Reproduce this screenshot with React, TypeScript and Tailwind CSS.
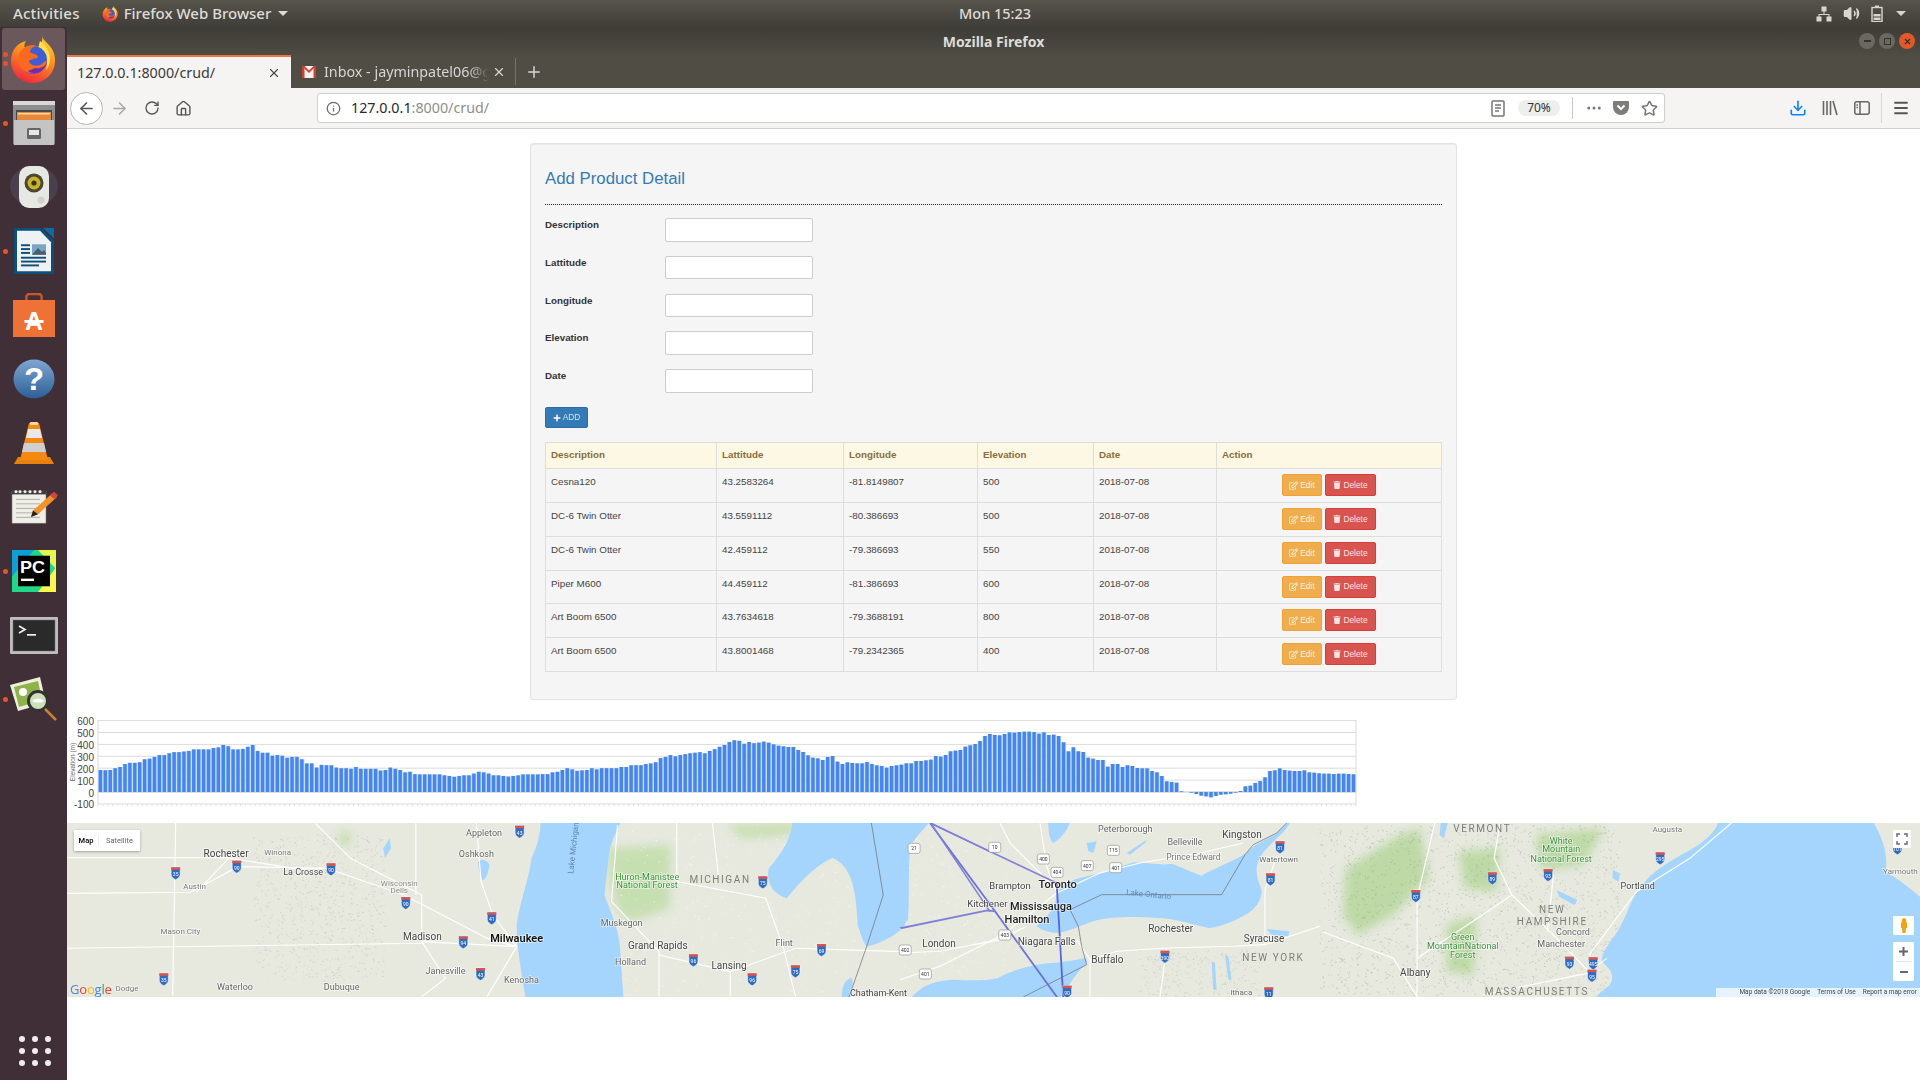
import { ArrowLeft, ArrowRight, Download, Home, Info, Menu, MoreHorizontal, Plus, RotateCw, Star, Volume2, X } from "lucide-react";
import { FaPlus, FaRegEdit, FaTrash } from "react-icons/fa";

const rows = [
  ["Cesna120", "43.2583264", "-81.8149807", "500", "2018-07-08"],
  ["DC-6 Twin Otter", "43.5591112", "-80.386693", "500", "2018-07-08"],
  ["DC-6 Twin Otter", "42.459112", "-79.386693", "550", "2018-07-08"],
  ["Piper M600", "44.459112", "-81.386693", "600", "2018-07-08"],
  ["Art Boom 6500", "43.7634618", "-79.3688191", "800", "2018-07-08"],
  ["Art Boom 6500", "43.8001468", "-79.2342365", "400", "2018-07-08"],
];

// elevation samples read off the chart, left part in metres
const leftBars = [
  185, 183, 185, 200, 210, 235, 245, 245, 250, 275, 280, 295, 310, 310, 325, 335, 335, 340, 345, 358, 358, 358, 358, 370, 375, 395, 385, 358, 358,
  362, 380, 395, 345, 330, 330, 305, 310, 305, 288, 295, 295, 275, 240, 240, 205, 228, 225, 225, 205, 200, 200, 195, 210, 195, 195, 195, 195, 180,
  185, 205, 195, 185, 165, 170, 150, 148, 148, 148, 148, 148, 140, 135, 128, 135, 140, 140, 155, 170, 165, 155, 140, 140, 135, 130, 135, 140, 148,
  148, 148, 148, 150, 150, 165, 170, 185, 200, 190, 178, 182, 185, 200, 190, 200, 200, 200, 200, 210, 210, 225, 225, 225, 235, 240, 250, 285, 295,
  310, 300, 310, 318, 325, 330, 335, 325, 345, 360, 380, 395, 420, 435, 430, 405, 420, 410, 415,
];
// right part, stored as the pixel row of the bar top (3x crop)
const rightTops = [
  95, 98, 103, 107, 109, 111, 111, 120, 126, 136, 143, 145, 150, 141, 138, 155, 162, 157, 159, 160, 160, 156, 162, 166, 168, 173, 168, 166, 164, 160,
  160, 153, 153, 151, 149, 138, 140, 135, 124, 122, 120, 110, 106, 102, 93, 78, 72, 75, 76, 72, 67, 68, 66, 65, 65, 66, 71, 67, 75, 74, 78, 97, 124,
  112, 124, 126, 143, 146, 150, 150, 170, 162, 162, 171, 166, 168, 174, 175, 175, 183, 187, 198, 214, 216, 218, 244, 246, 248, 252, 257, 259, 262,
  258, 254, 253, 251, 248, 243, 229, 227, 219, 213, 202, 183, 181, 175, 180, 182, 183, 183, 181, 187, 188, 190, 191, 191, 192, 191, 191, 192, 193,
];
const bars = [...leftBars, ...rightTops.map((t) => (246 - t) / 0.357)];

const Dot = ({ top }: { top: number }) => (
  <span className="absolute left-[3px] w-[5px] h-[5px] rounded-full bg-[#e95420]" style={{ top }} />
);

const FirefoxIcon = ({ size = 50 }: { size?: number }) => (
  <svg width={size} height={size} viewBox="0 0 50 50">
    <defs>
      <linearGradient id={`ff${size}`} x1="0.7" y1="0" x2="0.3" y2="1">
        <stop offset="0" stopColor="#ffd52a" />
        <stop offset="0.45" stopColor="#ff8a1e" />
        <stop offset="1" stopColor="#f0263c" />
      </linearGradient>
    </defs>
    <path d="M33 2c1 5 8 8 11 15 4 9 2 19-4 25-5 5-11 7-16 7C11 49 2 39 2 27 2 17 8 9 17 7c-2 3-2 5-1 7 3-3 9-3 13-1 4-4 5-7 4-11z" fill={`url(#ff${size})`} />
    <path d="M31 7c5 4 10 9 10 18 0 5-2 9-4 11 2-7 0-14-6-18-2-4-1-8 0-11z" fill="#ffe14a" />
    <circle cx="24" cy="26" r="14" fill="#3f5cd8" />
    <path d="M10 20c3-7 10-10 17-8-4 1-6 4-6 6 3 2 8 2 8 5-2 2-7 2-9 4 1 5 9 6 13 3 3-3 4-3 5-3-1 8-9 13-17 12C12 38 7 28 10 20z" fill="#f9691e" />
    <path d="M26 34c5 1 10-1 12-6-1 6-6 11-13 11-3 0-5-1-6-2 2-1 5-2 7-3z" fill="#7a2aa8" />
  </svg>
);

const FilesIcon = () => (
  <svg width="42" height="44" viewBox="0 0 42 44">
    <rect x="0" y="0" width="42" height="44" rx="2" fill="#8d8d8d" />
    <rect x="0" y="0" width="42" height="4" fill="#d8d8d8" />
    <rect x="3" y="9" width="36" height="11" fill="#4a4a4a" />
    <rect x="4" y="11" width="34" height="9" fill="#e8883a" />
    <rect x="5" y="12" width="32" height="1.5" fill="#f4d9a8" />
    <rect x="1" y="19" width="40" height="25" fill="#c4c4c4" />
    <rect x="14" y="27" width="14" height="11" rx="1.5" fill="#666" />
    <rect x="16" y="29" width="10" height="5" fill="#e6e6e6" />
  </svg>
);

const SpeakerIcon = () => (
  <svg width="48" height="42" viewBox="0 0 48 42">
    <ellipse cx="24" cy="20" rx="24" ry="20" fill="#5c5468" opacity="0.45" />
    <rect x="9" y="0" width="30" height="42" rx="10" fill="#e6e8e4" />
    <circle cx="24" cy="17" r="9.5" fill="#4a4630" />
    <circle cx="24" cy="17" r="6.5" fill="#c8b32a" />
    <circle cx="24" cy="17" r="2.6" fill="#3a3620" />
    <circle cx="31" cy="34" r="3.5" fill="#cfd1cc" />
  </svg>
);

const WriterIcon = () => (
  <svg width="42" height="48" viewBox="0 0 42 50" preserveAspectRatio="none">
    <path d="M1 1h27l13 13v35H1z" fill="#0b4f7a" />
    <path d="M30 1h11v11z" fill="#0e6aa5" />
    <path d="M4 4h23l11 12v30H4z" fill="#eef2f3" />
    <rect x="8" y="18" width="9" height="2" fill="#0b4f7a" />
    <rect x="8" y="22" width="9" height="2" fill="#0b4f7a" />
    <rect x="8" y="26" width="9" height="2" fill="#0b4f7a" />
    <rect x="19" y="18" width="14" height="11" fill="#7aa6c4" />
    <path d="M19 29l6-7 4 4 2-2 2 3v2z" fill="#44606f" />
    <rect x="8" y="31" width="25" height="2" fill="#0b4f7a" />
    <rect x="8" y="35" width="25" height="2" fill="#0b4f7a" />
    <rect x="8" y="39" width="18" height="2" fill="#0b4f7a" />
  </svg>
);

const StoreIcon = () => (
  <svg width="42" height="44" viewBox="0 0 44 44" preserveAspectRatio="none">
    <path d="M14 9V4a3 3 0 013-3h10a3 3 0 013 3v5" fill="none" stroke="#c9572a" strokeWidth="2.5" />
    <path d="M0 7h44v37H0z" fill="#ee7135" />
    <text x="22" y="37" textAnchor="middle" fontSize="26" fontWeight="700" fill="#fff" fontFamily="'Liberation Sans',sans-serif">
      A
    </text>
    <rect x="12" y="27" width="20" height="3" fill="#fff" />
  </svg>
);

const HelpIcon = () => (
  <svg width="42" height="40" viewBox="0 0 42 42" preserveAspectRatio="none">
    <defs>
      <linearGradient id="hp" x1="0" y1="0" x2="0" y2="1">
        <stop offset="0" stopColor="#7ea7d2" />
        <stop offset="1" stopColor="#2c5f97" />
      </linearGradient>
    </defs>
    <circle cx="21" cy="21" r="20.5" fill="url(#hp)" />
    <text x="21" y="33" textAnchor="middle" fontSize="33" fontWeight="700" fill="#fff" fontFamily="'Liberation Sans',sans-serif">
      ?
    </text>
  </svg>
);

const VlcIcon = () => (
  <svg width="42" height="44" viewBox="0 0 42 44">
    <path d="M5 36h32l4 7H1z" fill="#e8820c" />
    <path d="M16 2h10l9 37H7z" fill="#f58a12" />
    <path d="M15 8h12l2 9H13z" fill="#e9e9e9" />
    <path d="M11 22h20l2 9H9z" fill="#cfcfcf" />
    <rect x="17" y="1" width="8" height="3" rx="1" fill="#f9d9a0" />
  </svg>
);

const NotepadIcon = () => (
  <svg width="48" height="36" viewBox="0 0 48 40" preserveAspectRatio="none">
    <rect x="2" y="3" width="34" height="35" fill="#efefe8" stroke="#777" strokeWidth="0.6" />
    <rect x="2" y="1" width="34" height="5" fill="#3d3d3d" />
    {[6, 10, 15, 20, 25, 30].map((x) => (
      <circle key={x} cx={x} cy="3" r="1.6" fill="#eee" />
    ))}
    {[11, 16, 21, 26, 31].map((y) => (
      <rect key={y} x="6" y={y} width="24" height="1" fill="#a9a9a2" />
    ))}
    <path d="M21 31l2-7 19-19 5 4-19 19z" fill="#f2922a" />
    <path d="M40 7l4-4 4 4-4 4z" fill="#d6453b" />
    <path d="M21 31l2-7 5 4z" fill="#222" />
  </svg>
);

const PyCharmIcon = () => (
  <svg width="44" height="42" viewBox="0 0 44 44" preserveAspectRatio="none">
    <rect width="44" height="44" fill="#21d789" />
    <path d="M0 0h22L0 28z" fill="#0d9fd8" />
    <path d="M26 0h18v20z" fill="#fcf84a" opacity="0.9" />
    <path d="M44 18v26H26z" fill="#fcf84a" />
    <rect x="6" y="6" width="32" height="32" fill="#000" />
    <text x="8" y="24" fontSize="18" fontWeight="700" fill="#fff" fontFamily="'Liberation Sans',sans-serif">
      PC
    </text>
    <rect x="9" y="30" width="13" height="2.5" fill="#fff" />
  </svg>
);

const TerminalIcon = () => (
  <svg width="48" height="37" viewBox="0 0 48 37">
    <rect width="48" height="37" rx="1" fill="#bdbdbd" />
    <rect x="3" y="3" width="42" height="31" fill="#2a2a2a" stroke="#777" strokeWidth="0.5" />
    <path d="M9 9l6 3.500-6 3.500" stroke="#eee" strokeWidth="1.7" fill="none" />
    <rect x="17" y="17" width="9" height="1.7" fill="#eee" />
  </svg>
);

const ViewerIcon = () => (
  <svg width="47" height="45" viewBox="0 0 47 45">
    <path d="M0 8L30 0l6 26L8 34z" fill="#eef0dd" />
    <path d="M4 10l24-6 4 19L9 30z" fill="#8db34a" />
    <circle cx="13" cy="15" r="4" fill="#fff" />
    <circle cx="28" cy="24" r="9.5" fill="#cfe0b8" stroke="#333" strokeWidth="3" />
    <path d="M22 24c3-3 9-3 12 0-3 2-9 2-12 0z" fill="#fff" />
    <path d="M35 32l11 11" stroke="#c9832e" strokeWidth="2.5" />
  </svg>
);

const dockItems = [
  { icon: <FirefoxIcon />, active: true, dots: [25, 34] },
  { icon: <FilesIcon />, dots: [30] },
  { icon: <SpeakerIcon />, dots: [] },
  { icon: <WriterIcon />, dots: [30] },
  { icon: <StoreIcon />, dots: [] },
  { icon: <HelpIcon />, dots: [] },
  { icon: <VlcIcon />, dots: [] },
  { icon: <NotepadIcon />, dots: [] },
  { icon: <PyCharmIcon />, dots: [30] },
  { icon: <TerminalIcon />, dots: [] },
  { icon: <ViewerIcon />, dots: [30] },
];

const Dock = () => (
  <aside className="w-[67px] shrink-0 bg-[#412f37] flex flex-col">
    {dockItems.map((item, i) => (
      <div key={i} className="relative h-[64px] flex items-center justify-center">
        {item.active && <div className="absolute inset-x-[2px] top-[1px] bottom-[1px] rounded-[3px] bg-[#6b585c]" />}
        {item.dots.map((d) => (
          <Dot key={d} top={d} />
        ))}
        <div className="relative flex">{item.icon}</div>
      </div>
    ))}
    <div className="mt-auto mb-[14px] ml-[19px] grid grid-cols-3 gap-x-[7px] gap-y-[6px] w-[32px]">
      {Array.from({ length: 9 }).map((_, i) => (
        <span key={i} className="w-[6px] h-[6px] rounded-full bg-[#eeeeee]" />
      ))}
    </div>
  </aside>
);

const TopBar = () => (
  <header className="h-[27px] shrink-0 flex items-center bg-linear-to-b from-[#57544c] to-[#403e38] text-[#dedcd6] text-[15px] font-['Noto_Sans',sans-serif]">
    <div className="w-[959px] flex items-center">
      <span className="ml-[13px] font-medium tracking-[0.2px]">Activities</span>
      <span className="ml-[22px]">
        <FirefoxIcon size={17} />
      </span>
      <span className="ml-[5px] font-medium">Firefox Web Browser</span>
      <span className="ml-[7px] border-x-[5px] border-x-transparent border-t-[5px] border-t-[#dedcd6]" />
    </div>
    <span className="font-medium text-[14.5px]">Mon 15:23</span>
    <div className="ml-auto flex items-center mr-[14px]">
      <svg width="16" height="16" viewBox="0 0 16 16" fill="#d8d6d0">
        <rect x="5.5" y="0.5" width="5" height="5" />
        <rect x="0.5" y="10.5" width="5" height="5" />
        <rect x="10.5" y="10.5" width="5" height="5" />
        <path d="M7.5 5h1v3h5v3h-1V9H3.5v2h-1V8h5z" />
      </svg>
      <Volume2 size={17} className="ml-[11px] text-[#d8d6d0]" fill="#d8d6d0" />
      <svg className="ml-[11px]" width="12" height="17" viewBox="0 0 12 17" fill="none">
        <rect x="1" y="2.5" width="10" height="14" stroke="#d8d6d0" strokeWidth="1.4" />
        <rect x="4" y="0.5" width="4" height="2" fill="#d8d6d0" />
        <rect x="2.5" y="9" width="7" height="2.5" fill="#d8d6d0" />
        <rect x="2.5" y="12.5" width="7" height="2.5" fill="#d8d6d0" />
      </svg>
      <span className="ml-[13px] border-x-[5px] border-x-transparent border-t-[5px] border-t-[#d8d6d0]" />
    </div>
  </header>
);

const WindowButton = ({ children, close }: { children: React.ReactNode; close?: boolean }) => (
  <span
    className={
      close
        ? "w-[16px] h-[16px] rounded-full bg-[#e2582a] flex items-center justify-center text-[#3c2a20]"
        : "w-[16px] h-[16px] rounded-full bg-[#6b6860] flex items-center justify-center text-[#35332e]"
    }
  >
    {children}
  </span>
);

const GmailIcon = () => (
  <svg width="14" height="12" viewBox="0 0 14 12">
    <rect width="14" height="12" fill="#f3f3f3" />
    <path d="M0 0h2.5v12H0zM11.5 0H14v12h-2.5z" fill="#d23f31" />
    <path d="M0 0h2.5L7 4.5 11.5 0H14L7 7z" fill="#d23f31" />
  </svg>
);

const TabStrip = () => (
  <div className="h-[33px] flex items-stretch text-[14.3px] font-['Noto_Sans',sans-serif]">
    <div className="w-[224px] bg-[#f5f4f2] border-t-[2px] border-[#f0764a] flex items-center pl-[10px] pr-[10px] justify-between text-[#3b3b38]">
      <span>127.0.0.1:8000/crud/</span>
      <X size={14} className="text-[#4a4a48]" />
    </div>
    <div className="w-[225px] flex items-center pl-[11px] text-[#d8d6d0] border-r border-[#77746c] my-[3px]">
      <GmailIcon />
      <span className="ml-[8px] w-[165px] whitespace-nowrap [mask-image:linear-gradient(to_right,black_88%,transparent)]">Inbox - jayminpatel06@g</span>
      <X size={14} className="ml-[3px]" />
    </div>
    <span className="ml-[9px] flex items-center text-[#d8d6d0]">
      <Plus size={18} />
    </span>
  </div>
);

const Toolbar = () => (
  <div className="h-[41px] shrink-0 flex items-center bg-[#f5f4f2] border-b border-[#cfcecb] text-[#555553] text-[14.3px] font-['Noto_Sans',sans-serif]">
    <span className="ml-[3px] w-[33px] h-[33px] rounded-full border border-[#b5b5b2] bg-white flex items-center justify-center">
      <ArrowLeft size={19} />
    </span>
    <ArrowRight size={19} className="ml-[7px] text-[#aaa9a6]" />
    <RotateCw size={16} className="ml-[15px]" />
    <Home size={17} className="ml-[15px]" />
    <div className="ml-[125px] w-[1348px] h-[30px] bg-white border border-[#cfcecb] rounded-[3px] flex items-center">
      <Info size={15} className="ml-[8px] text-[#6a6a68]" />
      <span className="ml-[10px] text-[#2a2a28]">
        127.0.0.1<span className="text-[#8f8f8c]">:8000/crud/</span>
      </span>
      <div className="ml-auto flex items-center">
        <svg width="14" height="17" viewBox="0 0 14 17" fill="none" stroke="#777" strokeWidth="1.5">
          <rect x="1" y="1" width="12" height="15" rx="1" />
          <path d="M4 5h6M4 8h6M4 11h4" />
        </svg>
        <span className="ml-[13px] w-[42px] h-[16px] rounded-full bg-[#eeeeec] flex items-center justify-center text-[12px] text-[#333]">70%</span>
        <span className="ml-[12px] w-px h-[22px] bg-[#c9c8c5]" />
        <MoreHorizontal size={18} className="ml-[12px] text-[#777]" />
        <svg className="ml-[10px]" width="16" height="16" viewBox="0 0 16 16">
          <path d="M1 1h14a1 1 0 011 1v5a8 8 0 01-16 0V2a1 1 0 011-1z" fill="#7c7c7a" />
          <path d="M4.5 5.5L8 9l3.5-3.5" stroke="#fff" strokeWidth="2" fill="none" />
        </svg>
        <Star size={17} className="ml-[12px] mr-[6px] text-[#777]" strokeWidth={2.2} />
      </div>
    </div>
    <Download size={18} className="ml-[124px] text-[#0a84ff]" strokeWidth={2.2} />
    <svg className="ml-[15px]" width="16" height="16" viewBox="0 0 16 16" stroke="#666" strokeWidth="1.6" fill="none">
      <path d="M1.5 1v14M5 1v14M8.5 1v14M11 1l4 14" />
    </svg>
    <svg className="ml-[16px]" width="16" height="14" viewBox="0 0 16 14" stroke="#666" strokeWidth="1.5" fill="none">
      <rect x="0.8" y="0.8" width="14.4" height="12.4" rx="2" />
      <path d="M6 1v12" />
      <path d="M2.5 4H4M2.5 6.5H4" />
    </svg>
    <span className="ml-[11px] w-px h-[30px] bg-[#d6d5d2]" />
    <Menu size={18} className="ml-[10px] text-[#555]" strokeWidth={2.4} />
  </div>
);

const inputs = ["Description", "Lattitude", "Longitude", "Elevation", "Date"];

const ProductPanel = () => (
  <section className="mx-auto mt-[14px] w-[927px] h-[557px] shrink-0 bg-[#f5f5f5] border border-[#e3e3e3] rounded-[3px] px-[14px] font-['Liberation_Sans',Arial,sans-serif] text-[9.8px] text-[#333] shadow-[inset_0_1px_1px_rgba(0,0,0,0.05)]">
    <h2 className="mt-[25px] text-[16.8px] leading-[19px] text-[#337ab7]">Add Product Detail</h2>
    <div className="mt-[16px] border-t border-dotted border-[#222]" />
    <div className="mt-[13px] flex flex-col gap-[14.2px]">
      {inputs.map((label) => (
        <div key={label} className="flex items-start">
          <label className="w-[120px] font-bold leading-[14px]">{label}</label>
          <input className="w-[148px] h-[23.6px] bg-white border border-[#cccccc] rounded-[2px]" />
        </div>
      ))}
    </div>
    <button className="mt-[14.5px] w-[43px] h-[21px] flex items-center justify-center gap-[2px] bg-[#337ab7] border border-[#2e6da4] rounded-[2px] text-white text-[8.4px]">
      <FaPlus size={8} />
      <span className="opacity-80">ADD</span>
    </button>
    <table className="mt-[14px] w-[897px] table-fixed border-collapse">
      <colgroup>
        <col className="w-[171px]" />
        <col className="w-[127px]" />
        <col className="w-[134px]" />
        <col className="w-[116px]" />
        <col className="w-[123px]" />
        <col />
      </colgroup>
      <thead>
        <tr className="h-[26px] bg-[#fcf8e3] text-[#8a6d3b]">
          {["Description", "Lattitude", "Longitude", "Elevation", "Date", "Action"].map((h) => (
            <th key={h} className="border border-[#dddddd] px-[5px] text-left font-bold">
              {h}
            </th>
          ))}
        </tr>
      </thead>
      <tbody className="text-[#444]">
        {rows.map((row, i) => (
          <tr key={i} className="h-[33.8px]">
            {row.map((cell, j) => (
              <td key={j} className="border border-[#dddddd] px-[5px] pt-[6px] align-top leading-[14px]">
                {cell}
              </td>
            ))}
            <td className="border border-[#dddddd] pt-[5px] align-top text-center">
              <div className="flex justify-center gap-[3px]">
                <button className="w-[40px] h-[22px] flex items-center justify-center gap-[2px] bg-[#f0ad4e] border border-[#eea236] rounded-[2px] text-[#fff3df] text-[8.4px]">
                  <FaRegEdit size={9} />
                  Edit
                </button>
                <button className="w-[51px] h-[22px] flex items-center justify-center gap-[2px] bg-[#d9534f] border border-[#d43f3a] rounded-[2px] text-[#fbe3e2] text-[8.4px]">
                  <FaTrash size={8} />
                  Delete
                </button>
              </div>
            </td>
          </tr>
        ))}
      </tbody>
    </table>
  </section>
);

const Chart = () => {
  const x0 = 98;
  const x1 = 1356;
  const pitch = (x1 - x0) / bars.length;
  const ticks = [600, 500, 400, 300, 200, 100, 0, -100];
  return (
    <svg className="block mt-[12px] shrink-0" width="1300" height="111" viewBox="67 712 1300 111" fontFamily="'Liberation Sans',Arial,sans-serif">
      {ticks.map((t) => {
        const y = 792 - t * 0.119;
        return (
          <g key={t}>
            <line x1={x0} x2={x1} y1={y} y2={y} stroke={t === 0 ? "#bdbdbd" : "#dcdcdc"} />
            <text x={x0 - 4} y={y + 4.5} textAnchor="end" fontSize="10" fill="#444">
              {t}
            </text>
          </g>
        );
      })}
      <line x1={x0} x2={x0} y1={720} y2={804} stroke="#dcdcdc" />
      <line x1={x1} x2={x1} y1={720} y2={806} stroke="#dcdcdc" />
      {bars.map((v, i) => {
        const h = Math.abs(v) * 0.119;
        const y = v >= 0 ? 792 - h : 792;
        return (
          <g key={i}>
            <rect x={x0 + i * pitch} y={y} width={pitch} height={h} fill="#c5d6ef" />
            <rect x={x0 + i * pitch + 0.7} y={y} width={pitch - 1.5} height={h} fill="#4285f4" />
            <line x1={x0 + i * pitch} x2={x0 + i * pitch} y1={804} y2={806} stroke="#e2e2e2" />
          </g>
        );
      })}
      <text transform="translate(75 762) rotate(-90)" textAnchor="middle" fontSize="6.5" fill="#666">
        Elevation (m)
      </text>
    </svg>
  );
};

// map art is traced in crop coordinates: two crops squeezed to 1568 wide and 3x high, and one plain 3x crop in the middle
const LEFT = "matrix(0.5931 0 0 0.3333 60 815)";
const RIGHT = "matrix(0.5931 0 0 0.3333 990 815)";
const MID = "matrix(0.3333 0 0 0.3333 900 823)";
const lx = (x: number) => 60 + x * 0.5931;
const rx = (x: number) => 990 + x * 0.5931;
const my = (y: number) => 815 + y / 3;
const cx = (x: number) => 900 + x / 3;
const cy = (y: number) => 823 + y / 3;

const water = "#a5d5fd";
const leftWater = [
  "M810 24L945 24C935 60 925 100 925 130L918 240C930 300 945 350 945 420L950 550L785 550C778 470 770 400 770 330C775 260 790 200 795 130C805 90 810 60 810 24Z",
  "M1235 24C1232 60 1225 100 1195 160C1190 200 1200 235 1225 250C1240 220 1265 160 1302 128C1330 150 1342 200 1345 330C1350 360 1355 385 1360 395C1385 385 1415 355 1425 330C1425 260 1425 180 1432 100C1440 70 1455 45 1465 24Z",
  "M1318 548C1318 515 1322 495 1335 488C1338 510 1335 530 1332 548Z",
  "M705 140C710 130 722 135 724 150C722 175 718 195 712 195C708 175 705 160 705 140Z",
  "M545 100L556 70L558 100L548 130Z",
];
const midWater = [
  // Huron edge
  "M0 0L60 0C40 25 30 60 28 110C25 170 28 240 24 290L0 315Z",
  // Georgian bay
  "M445 0L510 0C500 25 480 50 458 60C448 45 445 25 445 0Z",
  // Ontario
  "M410 310C430 285 465 270 470 215C480 190 510 170 560 160C610 150 650 135 700 118C750 120 790 128 815 122C840 130 880 150 905 158C945 135 1000 115 1040 90C1060 65 1100 50 1130 30L1160 0L1170 0C1150 35 1110 60 1085 95C1068 125 1062 145 1085 200C1085 225 1075 250 1045 270C1005 295 960 312 925 315C880 305 820 285 770 285C710 280 640 280 590 292C545 305 505 328 470 330C445 328 425 322 410 310Z",
  // Erie
  "M30 528C60 490 100 472 160 470C220 472 270 475 300 462C340 440 400 425 450 420C490 418 530 410 555 405C562 412 562 420 555 428C530 445 510 485 478 528Z",
  // Finger lakes and Oneida
  "M1100 318L1168 325L1165 340L1115 335Z",
  "M935 415L945 420L950 500L940 500Z",
  "M975 395L985 400L995 470L985 470Z",
  "M560 60L590 55L580 90L565 85Z",
  "M680 90L740 50L735 60L690 95Z",
];
const rightWater = [
  "M1228 24C1220 55 1205 80 1185 100C1160 125 1135 150 1115 180C1095 215 1085 245 1078 275C1070 310 1062 340 1050 370C1040 395 1030 420 1032 440C1045 460 1055 480 1045 510C1035 525 1025 535 1020 553L1568 553L1568 245C1545 210 1525 185 1510 170C1515 120 1505 70 1490 24Z",
  "M1050 165L1062 175L1060 200L1050 190Z",
  "M955 225L990 255L985 270L960 245Z",
  "M760 24L772 24L765 70L758 60Z",
];
const leftGreen = ["M925 100L1030 90L1028 280L960 322L938 280L925 180Z", "M1125 30L1260 24L1230 60L1150 70Z", "M470 50L490 50L490 90L470 90Z"];
const rightGreen = [
  "M600 160L690 60L725 40L740 190L680 300L620 360L595 300Z",
  "M790 110L860 100L855 230L800 220Z",
  "M770 330L820 300L815 480L770 470Z",
  "M920 60L1035 40L1000 150L930 165Z",
];
const leftRoads = [
  "M12 235L220 232L300 155L450 160L580 240L720 370L770 395",
  "M195 24L190 540",
  "M0 128L280 128L430 170",
  "M430 24L490 130L610 240L610 380L770 395",
  "M600 24L600 240",
  "M702 24L710 200L730 300L770 395",
  "M610 380L650 490L610 545",
  "M770 395L720 545",
  "M230 232L300 100",
  "M12 400L610 385",
  "M940 30L930 260L1010 410L1010 545",
  "M1040 24L1040 200L1190 250L1220 400L1240 545",
  "M1010 420L1130 470L1240 400L1420 410",
  "M1100 24L1110 180",
  "M1130 470L1130 545",
];
const midRoads = [
  "M0 470L120 430L300 340L420 250L470 210",
  "M470 210L440 130L420 0",
  "M470 210L600 150L720 120L900 90L1030 60",
  "M470 200L330 60L300 0",
  "M380 310L300 350L120 385L0 390",
  "M570 410L650 385L800 375L1000 370L1095 365L1260 310",
  "M570 410L570 522",
  "M570 410L530 350",
  "M800 375L780 522",
  "M1095 365L1095 200L1130 100",
];
const rightRoads = [
  "M560 350L680 430L720 545",
  "M720 545L720 250L750 24",
  "M880 240L850 130L860 24",
  "M880 240L950 360L1010 470L1040 430",
  "M880 240L830 300L720 430",
  "M1010 420L1090 230L1180 130L1250 24",
  "M950 180L940 350",
  "M830 540L1020 470",
];
const usShields: [number, number, string, boolean][] = [
  [298, 155, "90", false],
  [195, 175, "35", false],
  [175, 493, "35", false],
  [457, 163, "90", false],
  [583, 264, "90", false],
  [728, 310, "41", false],
  [680, 382, "94", false],
  [709, 477, "43", false],
  [775, 50, "43", false],
  [1185, 202, "75", false],
  [1068, 436, "96", false],
  [1167, 493, "96", false],
  [1284, 405, "69", false],
  [1240, 469, "75", false],
  [489, 97, "81", true],
  [473, 193, "81", true],
  [295, 425, "390", true],
  [718, 243, "87", true],
  [847, 190, "89", true],
  [941, 180, "93", true],
  [977, 443, "93", true],
  [1017, 445, "495", true],
  [1015, 482, "95", true],
  [1130, 130, "295", true],
  [470, 535, "11", true],
  [130, 530, "90", true],
  [1530, 100, "101", true],
];
const caShields: [number, number, string, boolean][] = [
  [1440, 100, "21", false],
  [1425, 405, "402", false],
  [1459, 477, "401", false],
  [8, 97, "10", true],
  [90, 132, "400", true],
  [113, 172, "404", true],
  [164, 152, "407", true],
  [208, 106, "115", true],
  [212, 158, "401", true],
  [25, 360, "403", true],
];
// text, x, y in crop coordinates, size, colour, weight
const leftLabels: [string, number, number, number, string?, number?][] = [
  ["Rochester", 280, 118, 10],
  ["Winona", 367, 112, 8, "#777"],
  ["La Crosse", 410, 172, 9],
  ["Appleton", 715, 55, 9, "#666"],
  ["Oshkosh", 702, 118, 9, "#666"],
  ["Austin", 227, 214, 8, "#777"],
  ["Wisconsin", 572, 203, 8, "#888"],
  ["Dells", 572, 225, 8, "#888"],
  ["Mason City", 203, 347, 8, "#777"],
  ["Madison", 611, 365, 10],
  ["Milwaukee", 770, 371, 11, "#111", 600],
  ["Janesville", 650, 469, 9, "#666"],
  ["Kenosha", 778, 495, 9, "#666"],
  ["Waterloo", 295, 517, 9, "#666"],
  ["Dubuque", 475, 515, 9, "#666"],
  ["Dodge", 113, 518, 8, "#777"],
  ["Muskegon", 947, 325, 9, "#666"],
  ["Grand Rapids", 1008, 393, 10],
  ["Holland", 962, 441, 9, "#666"],
  ["Lansing", 1128, 453, 10],
  ["Flint", 1221, 383, 9, "#666"],
  ["Chatham-Kent", 1380, 535, 9],
  ["Huron-Manistee", 990, 185, 9, "#3f8f3f"],
  ["National Forest", 990, 211, 9, "#3f8f3f"],
];
const midLabels: [string, number, number, number, string?, number?][] = [
  ["Kitchener", 262, 243, 9.5, "#444"],
  ["London", 117, 364, 10, "#444"],
  ["Brampton", 330, 190, 9.5, "#444"],
  ["Toronto", 473, 186, 11, "#222", 500],
  ["Mississauga", 423, 253, 11, "#222", 500],
  ["Hamilton", 381, 291, 11, "#222", 500],
  ["Niagara Falls", 440, 358, 10, "#444"],
  ["Buffalo", 622, 412, 10, "#444"],
  ["Rochester", 812, 317, 10, "#444"],
  ["Syracuse", 1092, 347, 10, "#444"],
  ["Peterborough", 676, 19, 9, "#666"],
  ["Belleville", 855, 56, 9, "#666"],
  ["Prince Edward", 880, 102, 8.5, "#777"],
  ["Kingston", 1026, 36, 10, "#444"],
  ["Watertown", 1136, 109, 8, "#666"],
  ["Ithaca", 1024, 507, 8, "#666"],
];
const rightLabels: [string, number, number, number, string?, number?][] = [
  ["Albany", 717, 473, 10, "#444"],
  ["White", 963, 77, 9, "#3f8f3f"],
  ["Mountain", 963, 103, 9, "#3f8f3f"],
  ["National Forest", 963, 131, 9, "#3f8f3f"],
  ["Green", 797, 365, 9, "#3f8f3f"],
  ["MountainNational", 797, 392, 9, "#3f8f3f"],
  ["Forest", 797, 419, 9, "#3f8f3f"],
  ["Concord", 983, 352, 9, "#666"],
  ["Manchester", 963, 387, 9, "#666"],
  ["Augusta", 1142, 43, 8, "#777"],
  ["Portland", 1092, 213, 9, "#444"],
  ["Yarmouth", 1535, 168, 8, "#777"],
];
const regions: [string, number, number, number][] = [
  ["VERMONT", rx(830), my(41), 10],
  ["NEW", rx(948), my(286), 10],
  ["HAMPSHIRE", rx(948), my(320), 10],
  ["NEW YORK", cx(1120), cy(406), 10],
  ["MASSACHUSETTS", rx(922), my(530), 10],
  ["MICHIGAN", lx(1113), my(195), 10],
];

// cheap repeatable hill shading and speckle
const hills = (x: number, y: number, w: number, h: number, n: number, seed: number) => {
  let s = seed;
  const next = () => {
    s = (s * 16807) % 2147483647;
    return s / 2147483647;
  };
  let d = "";
  for (let i = 0; i < n; i++) {
    const a = x + next() * w;
    const b = y + next() * h;
    d += `M${a.toFixed(1)} ${b.toFixed(1)}l${(next() * 4 - 2).toFixed(1)} ${(next() * 3 - 1.5).toFixed(1)}`;
  }
  return d;
};

const Label = ({ t, x, y, size, color, weight }: { t: string; x: number; y: number; size: number; color?: string; weight?: number }) => (
  <text x={x} y={y + 3} textAnchor="middle" fontSize={size} fill={color ?? "#444"} fontWeight={weight ?? 400} stroke="#fff" strokeOpacity="0.6" strokeWidth="1.6" paintOrder="stroke">
    {t}
  </text>
);

const MapArt = () => (
  <svg className="block w-full h-full" viewBox="67 823 1853 174" preserveAspectRatio="none" fontFamily="Roboto,'Liberation Sans',sans-serif">
    <defs>
      <filter id="soft" x="-20%" y="-20%" width="140%" height="140%">
        <feGaussianBlur stdDeviation="5" />
      </filter>
    </defs>
    <rect x="67" y="823" width="1853" height="174" fill="#e7e9df" />
    <g filter="url(#soft)" opacity="0.8">
      <g transform={LEFT}>
        {leftGreen.map((d) => (
          <path key={d} d={d} fill="#bfdca6" />
        ))}
      </g>
      <g transform={RIGHT}>
        {rightGreen.map((d) => (
          <path key={d} d={d} fill="#b4d598" />
        ))}
      </g>
    </g>
    <path d={hills(255, 835, 130, 145, 800, 11)} stroke="#8f9488" strokeWidth="0.5" opacity="0.5" />
    <path d={hills(1320, 825, 300, 170, 1800, 23)} stroke="#7d8577" strokeWidth="0.6" opacity="0.5" />
    <path d={hills(1140, 950, 120, 46, 260, 37)} stroke="#8f9488" strokeWidth="0.5" opacity="0.5" />
    <path d={hills(620, 830, 240, 165, 260, 41)} stroke="#ffffff" strokeWidth="1" opacity="0.55" />
    <path d={hills(900, 830, 110, 165, 200, 53)} stroke="#ffffff" strokeWidth="1" opacity="0.55" />
    <g transform={LEFT}>
      {leftWater.map((d) => (
        <path key={d} d={d} fill={water} />
      ))}
      {leftRoads.map((d) => (
        <path key={d} d={d} fill="none" stroke="#fff" strokeWidth="1.1" vectorEffect="non-scaling-stroke" />
      ))}
    </g>
    <g transform={RIGHT}>
      {rightWater.map((d) => (
        <path key={d} d={d} fill={water} />
      ))}
      <path d="M1500 24L1568 24L1568 220L1530 170L1510 100Z" fill="#e7e9df" />
      {rightRoads.map((d) => (
        <path key={d} d={d} fill="none" stroke="#fff" strokeWidth="1.1" vectorEffect="non-scaling-stroke" />
      ))}
    </g>
    <g transform={MID}>
      {midWater.map((d) => (
        <path key={d} d={d} fill={water} />
      ))}
      {midRoads.map((d) => (
        <path key={d} d={d} fill="none" stroke="#fff" strokeWidth="1.1" vectorEffect="non-scaling-stroke" />
      ))}
    </g>
    <g fill="none" strokeWidth="0.7" stroke="#6f6f6f">
      <polyline points={`${lx(1368)},${my(24)} ${lx(1388)},${my(240)} ${lx(1360)},${my(395)} ${lx(1330)},${my(548)}`} />
      <polyline
        points={`${cx(370)},${cy(522)} ${cx(560)},${cy(425)} ${cx(545)},${cy(370)} ${cx(535)},${cy(310)} ${cx(510)},${cy(260)} ${cx(605)},${cy(215)} ${cx(965)},${cy(215)} ${cx(1035)},${cy(95)} ${cx(1060)},${cy(65)} ${cx(1130)},${cy(30)} ${cx(1160)},${cy(0)}`}
      />
    </g>
    <g fill="none" stroke="#7e7fd8" strokeWidth="1.5">
      <polyline points={`${lx(1468)},${my(24)} ${lx(1568)},${my(110)}`} />
      <polyline points={`${cx(90)},${cy(0)} ${cx(470)},${cy(180)}`} />
      <polyline points={`${cx(90)},${cy(0)} ${cx(285)},${cy(265)} ${cx(475)},${cy(528)}`} strokeWidth="1.8" stroke="#6c70dc" />
      <polyline points={`${lx(1420)},${my(340)} ${cx(5)},${cy(315)} ${cx(262)},${cy(262)} ${cx(285)},${cy(265)}`} strokeWidth="1.8" />
      <polyline points={`${lx(1468)},${my(24)} ${lx(1568)},${my(290)}`} />
      <polyline points={`${cx(470)},${cy(180)} ${cx(490)},${cy(528)}`} strokeWidth="1.8" stroke="#5a62e0" />
    </g>
    {usShields.map(([x, y, n, right]) => {
      const px = right ? rx(x) : lx(x);
      const py = my(y);
      return (
        <g key={`${x}-${n}`}>
          <path d={`M${px - 4.5} ${py - 6}h9v7c0 3-2.5 4-4.5 5.5c-2-1.5-4.5-2.5-4.5-5.5z`} fill="#2f6cc0" stroke="#fff" strokeWidth="0.5" />
          <rect x={px - 4.5} y={py - 6} width="9" height="2.5" fill="#d9534f" />
          <text x={px} y={py + 3} textAnchor="middle" fontSize="5" fill="#fff">
            {n}
          </text>
        </g>
      );
    })}
    {caShields.map(([x, y, n, right]) => {
      const px = right ? rx(x) : lx(x);
      const py = my(y);
      return (
        <g key={`${x}-${n}`}>
          <rect x={px - 6} y={py - 5} width="12" height="10" rx="2" fill="#fff" stroke="#888" strokeWidth="0.6" />
          <text x={px} y={py + 2} textAnchor="middle" fontSize="5" fill="#333">
            {n}
          </text>
        </g>
      );
    })}
    {leftLabels.map(([t, x, y, size, color, weight]) => (
      <Label key={t} t={t} x={lx(x)} y={my(y)} size={size} color={color} weight={weight} />
    ))}
    {midLabels.map(([t, x, y, size, color, weight]) => (
      <Label key={t + "m"} t={t} x={cx(x)} y={cy(y)} size={size} color={color} weight={weight} />
    ))}
    {rightLabels.map(([t, x, y, size, color, weight]) => (
      <Label key={t + "r"} t={t} x={rx(x)} y={my(y)} size={size} color={color} weight={weight} />
    ))}
    {regions.map(([t, x, y, size]) => (
      <text key={t} x={x} y={y + 3} textAnchor="middle" fontSize={size} fill="#7e7e78" letterSpacing="1.6">
        {t}
      </text>
    ))}
    <text transform={`translate(${lx(870)} ${my(100)}) rotate(-84)`} textAnchor="middle" fontSize="8" fill="#5f86b8">
      Lake Michigan
    </text>
    <text transform={`translate(${cx(745)} ${cy(222)}) rotate(6)`} textAnchor="middle" fontSize="8" fill="#5f86b8">
      Lake Ontario
    </text>
  </svg>
);

const MapPanel = () => (
  <div className="relative h-[174px] shrink-0 overflow-hidden font-['Roboto','Liberation_Sans',sans-serif]">
    <MapArt />
    <div className="absolute left-[7px] top-[7px] w-[66px] h-[21px] flex items-center bg-white rounded-[1px] shadow-[0_1px_3px_rgba(0,0,0,0.3)] text-[7.5px]">
      <span className="w-[25px] text-center font-medium text-black border-r border-[#eee]">Map</span>
      <span className="flex-1 text-center text-[#666]">Satellite</span>
    </div>
    <div className="absolute right-[9px] top-[7px] w-[18px] h-[18px] bg-white rounded-[1px] flex items-center justify-center">
      <svg width="12" height="12" viewBox="0 0 12 12" stroke="#666" strokeWidth="1.4" fill="none">
        <path d="M1 4V1h3M8 1h3v3M11 8v3H8M4 11H1V8" />
      </svg>
    </div>
    <div className="absolute right-[6px] top-[93px] w-[21px] h-[19px] bg-white rounded-[1px] flex items-center justify-center">
      <svg width="8" height="15" viewBox="0 0 8 15" fill="#f0a30a">
        <circle cx="4" cy="2.5" r="2.2" />
        <path d="M1 6a3 3 0 016 0v4H6l-.5 5h-3L2 10H1z" />
      </svg>
    </div>
    <div className="absolute right-[6px] top-[119px] w-[21px] h-[39px] bg-white rounded-[1px] flex flex-col items-center text-[#666]">
      <span className="h-[19px] flex items-center">
        <svg width="9" height="9" viewBox="0 0 9 9" fill="#666">
          <path d="M3.5 0h2v3.500H9v2H5.500V9h-2V5.500H0v-2h3.500z" />
        </svg>
      </span>
      <span className="w-[15px] h-px bg-[#e6e6e6]" />
      <span className="h-[19px] flex items-center">
        <span className="w-[8px] h-[2px] bg-[#666]" />
      </span>
    </div>
    <div className="absolute left-[3px] bottom-0 text-[13px] leading-[16px] font-medium tracking-[-0.2px] font-['Open_Sans',sans-serif]">
      <span className="text-[#4285f4]">G</span>
      <span className="text-[#ea4335]">o</span>
      <span className="text-[#fbbc05]">o</span>
      <span className="text-[#4285f4]">g</span>
      <span className="text-[#34a853]">l</span>
      <span className="text-[#ea4335]">e</span>
    </div>
    <div className="absolute right-0 bottom-0 w-[204px] h-[9px] flex items-center justify-end gap-[7px] pr-[3px] bg-white/70 text-[6.5px] leading-[9px] text-[#444] whitespace-nowrap">
      <span>Map data ©2018 Google</span>
      <span>Terms of Use</span>
      <span>Report a map error</span>
    </div>
  </div>
);

export default function App() {
  return (
    <div className="w-[1920px] h-[1080px] overflow-hidden flex flex-col bg-white">
      <TopBar />
      <div className="flex-1 min-h-0 flex">
        <Dock />
        <main className="flex-1 min-w-0 flex flex-col">
          <div className="shrink-0 bg-linear-to-b from-[#3e3c37] to-[#504d45] to-50%">
            <div className="h-[28px] grid grid-cols-[1fr_auto_1fr] items-center text-[#dedcd6]">
              <span />
              <span className="text-[14px] font-bold font-['Noto_Sans',sans-serif]">Mozilla Firefox</span>
              <div className="flex justify-end gap-[4px] pr-[5px]">
                <WindowButton>
                  <span className="w-[7px] h-[2px] bg-current" />
                </WindowButton>
                <WindowButton>
                  <span className="w-[7px] h-[7px] border border-current" />
                </WindowButton>
                <WindowButton close>
                  <X size={9} strokeWidth={3} />
                </WindowButton>
              </div>
            </div>
            <TabStrip />
          </div>
          <Toolbar />
          <ProductPanel />
          <Chart />
          <MapPanel />
        </main>
      </div>
    </div>
  );
}
